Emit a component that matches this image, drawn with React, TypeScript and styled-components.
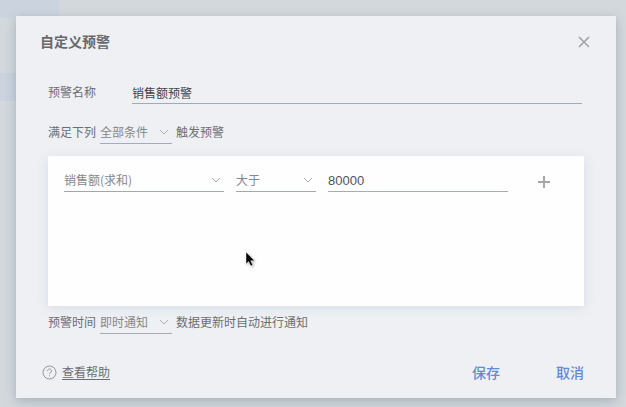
import React from "react";
import styled, { createGlobalStyle } from "styled-components";

const GlobalStyle = createGlobalStyle`
  * { box-sizing: border-box; }
  body {
    margin: 0;
    background: #d3d8dc;
    font-family: "Noto Sans CJK SC", sans-serif;
    font-size: 12px;
    line-height: 20px;
    color: #6c6e72;
  }
  button, input, select { font: inherit; color: inherit; }
`;

const Backdrop = styled.div`
  min-height: 100vh;
  padding: 16px 10px 9px 16px;
  background:
    linear-gradient(#cbd4de, #cbd4de) 0 0 / 59px 18px no-repeat,
    linear-gradient(#cad3de, #cad3de) 0 73px / 16px 28px no-repeat,
    #d3d8dc;
`;

const Dialog = styled.form`
  position: relative;
  display: flex;
  flex-direction: column;
  padding: 16px 32px 15px;
  background: #eef0f3;
  box-shadow: 0 3px 10px rgba(100, 118, 138, 0.4);
`;

const Header = styled.header`
  display: flex;
  align-items: center;
  justify-content: space-between;
  margin: 0 -8px 30px;
`;

const Title = styled.h1`
  margin: 0;
  font-size: 14px;
  line-height: 18px;
  font-weight: 700;
  color: #66686b;
  align-self: flex-start;
`;

const IconButton = styled.button`
  display: flex;
  align-items: center;
  justify-content: center;
  width: 16px;
  height: 20px;
  padding: 0;
  border: 0;
  background: none;
  color: #a0a2a5;
  cursor: pointer;
`;

const NameRow = styled.div`
  display: grid;
  grid-template-columns: 84px 1fr;
  align-items: start;
  padding-right: 2px;
`;

const Field = styled.input<{ $numeric?: boolean }>`
  width: 100%;
  min-width: 0;
  height: 22px;
  padding: 0;
  border: 0;
  border-bottom: 1px solid ${(p) => (p.$numeric ? "#a6acb5" : "#9aabca")};
  border-radius: 0;
  outline: 0;
  background: transparent;
  color: ${(p) => (p.$numeric ? "#51535f" : "#3f4349")};
  font-family: ${(p) => (p.$numeric ? '"Liberation Sans", sans-serif' : "inherit")};
  font-size: ${(p) => (p.$numeric ? "13px" : "12px")};
`;

const Sentence = styled.div<{ $top: number }>`
  display: flex;
  align-items: flex-start;
  gap: 4px;
  margin-top: ${(p) => p.$top}px;
`;

const SelectBox = styled.div<{ $line: string }>`
  display: grid;
  width: 100%;
  height: 22px;
  border-bottom: 1px solid ${(p) => p.$line};
  color: #85878c;
  & > * { grid-area: 1 / 1; }
  & > svg { align-self: start; justify-self: end; margin: 7px 3px 0 0; pointer-events: none; }
`;

const SmallSelect = styled.div`
  width: 72px;
`;

const NativeSelect = styled.select`
  appearance: none;
  width: 100%;
  height: 20px;
  padding: 0;
  border: 0;
  border-radius: 0;
  outline: 0;
  background: transparent;
`;

const Conditions = styled.section`
  min-height: 150px;
  margin-top: 12px;
  padding: 14px 32px 14px 16px;
  background: #fefefe;
  box-shadow: 0 2px 10px rgba(150, 168, 198, 0.25);
`;

const ConditionRow = styled.div`
  display: grid;
  grid-template-columns: 160px 80px minmax(60px, 1fr) 32px;
  column-gap: 12px;
  align-items: start;
`;

const AddSlot = styled.div`
  display: flex;
  justify-content: flex-end;
  padding-top: 2px;
`;

const Footer = styled.footer`
  display: flex;
  align-items: center;
  margin-top: 27px;
`;

const Help = styled.a`
  display: flex;
  align-items: center;
  gap: 5px;
  margin-left: -6px;
  color: #6c6e72;
  text-decoration: none;
  & > span { text-decoration: underline; text-underline-offset: 2px; }
`;

const Actions = styled.div`
  display: flex;
  gap: 56px;
  margin-left: auto;
`;

const TextButton = styled.button`
  padding: 0;
  border: 0;
  background: none;
  color: #6389d3;
  font-size: 14px;
  line-height: 22px;
  font-weight: 500;
  cursor: pointer;
`;

const Cursor = styled.svg`
  position: absolute;
  left: 229px;
  top: 235px;
  pointer-events: none;
  filter: drop-shadow(1px 1px 1px rgba(0, 0, 0, 0.3));
`;

interface SelectProps {
  label: string;
  options: string[];
  line: string;
}

function Select({ label, options, line }: SelectProps) {
  return (
    <SelectBox $line={line}>
      <NativeSelect aria-label={label}>
        {options.map((o) => (
          <option key={o}>{o}</option>
        ))}
      </NativeSelect>
      <svg width="10" height="6" viewBox="0 0 10 6" fill="none" stroke="#abaeb5">
        <path d="M1 1l4 4 4-4" />
      </svg>
    </SelectBox>
  );
}

export default function App() {
  return (
    <>
      <GlobalStyle />
      <Backdrop>
        <Dialog role="dialog" aria-labelledby="title" onSubmit={(e) => e.preventDefault()}>
          <Header>
            <Title id="title">自定义预警</Title>
            <IconButton type="button" aria-label="关闭">
              <svg width="12" height="12" viewBox="0 0 12 12" stroke="currentColor" strokeWidth="1.6">
                <path d="M1 1l10 10M11 1L1 11" />
              </svg>
            </IconButton>
          </Header>

          <NameRow>
            <label htmlFor="name">预警名称</label>
            <Field id="name" defaultValue="销售额预警" />
          </NameRow>

          <Sentence $top={18}>
            <span>满足下列</span>
            <SmallSelect>
              <Select label="满足下列" options={["全部条件", "任一条件"]} line="#a3a9cc" />
            </SmallSelect>
            <span>触发预警</span>
          </Sentence>

          <Conditions>
            <ConditionRow>
              <Select label="指标" options={["销售额(求和)"]} line="#a0a8b2" />
              <Select label="比较" options={["大于", "小于", "等于"]} line="#a0a8b2" />
              <Field $numeric aria-label="数值" inputMode="numeric" defaultValue="80000" />
              <AddSlot>
                <IconButton type="button" aria-label="添加条件">
                  <svg width="12" height="12" viewBox="0 0 12 12" stroke="#a6a7a9" strokeWidth="2">
                    <path d="M6 0v12M0 6h12" />
                  </svg>
                </IconButton>
              </AddSlot>
            </ConditionRow>
          </Conditions>

          <Sentence $top={6}>
            <span>预警时间</span>
            <SmallSelect>
              <Select label="预警时间" options={["即时通知", "定时通知"]} line="#a6a9b4" />
            </SmallSelect>
            <span>数据更新时自动进行通知</span>
          </Sentence>

          <Footer>
            <Help href="#help">
              <svg width="15" height="15" viewBox="0 0 15 15" fill="none" stroke="#96989b">
                <circle cx="7.5" cy="7.5" r="6.5" />
                <path d="M5.5 6a2 2 0 1 1 3.1 1.7C7.8 8.2 7.5 8.5 7.5 9.3M7.5 10.3v1" />
              </svg>
              <span>查看帮助</span>
            </Help>
            <Actions>
              <TextButton type="submit">保存</TextButton>
              <TextButton type="button">取消</TextButton>
            </Actions>
          </Footer>

          <Cursor width="10" height="17" viewBox="0 0 10 17" aria-hidden="true">
            <path d="M1 1v12l2.6-2.5L5.8 15l2-1-2.1-4.2H9.5z" fill="#000" stroke="#fff" strokeWidth="0.5" />
          </Cursor>
        </Dialog>
      </Backdrop>
    </>
  );
}
